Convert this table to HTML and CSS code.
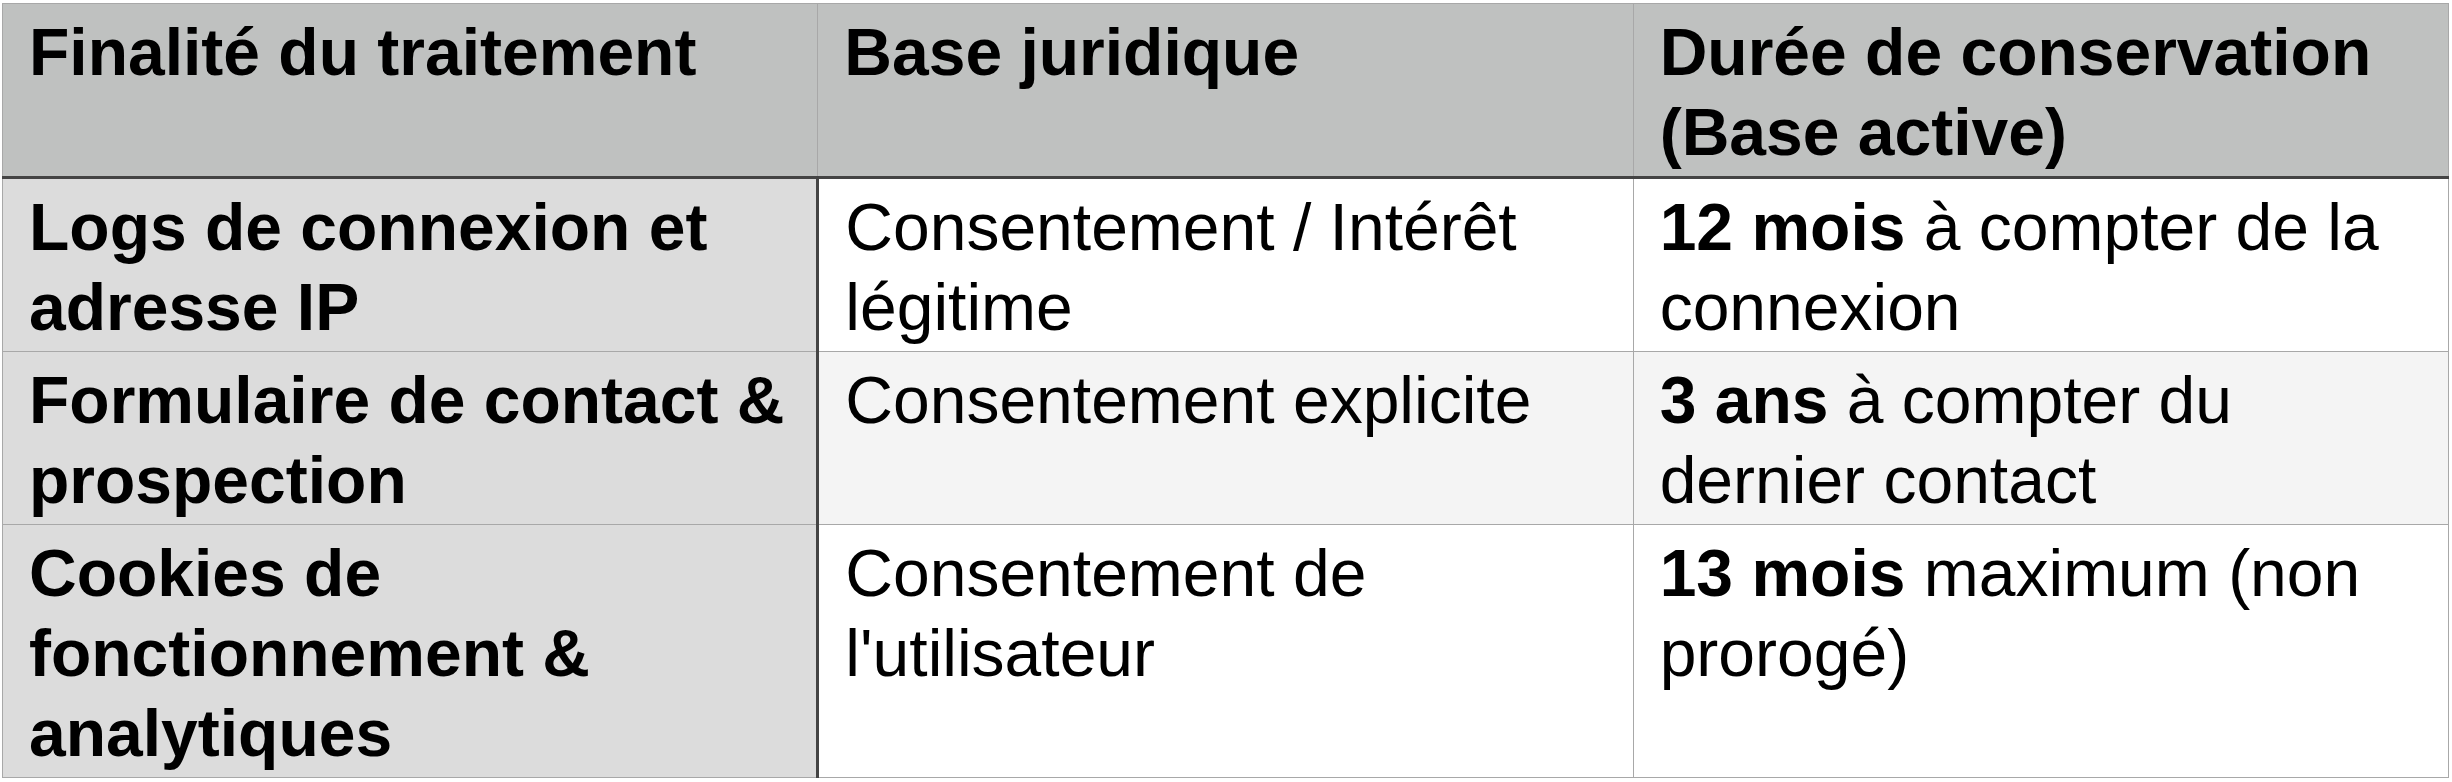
FILE: index.html
```html
<!DOCTYPE html>
<html lang="fr">
<head>
<meta charset="utf-8">
<title>Durées de conservation</title>
<link rel="stylesheet" href="styles.css">
</head>
<body>
<table class="retention">
  <thead>
    <tr>
      <th>Finalité du traitement</th>
      <th>Base juridique</th>
      <th>Durée de conservation (Base active)</th>
    </tr>
  </thead>
  <tbody>
    <tr>
      <th class="purpose">Logs de connexion et adresse IP</th>
      <td>Consentement / Intérêt légitime</td>
      <td><strong>12 mois</strong> <span>à compter de la</span> <span>connexion</span></td>
    </tr>
    <tr class="alt">
      <th class="purpose">Formulaire de contact &amp; prospection</th>
      <td>Consentement explicite</td>
      <td><strong>3 ans</strong> <span>à compter du</span> <span>dernier contact</span></td>
    </tr>
    <tr>
      <th class="purpose">Cookies de fonctionnement &amp; analytiques</th>
      <td>Consentement de l'utilisateur</td>
      <td><strong>13 mois</strong> <span>maximum (non</span> <span>prorogé)</span></td>
    </tr>
  </tbody>
</table>
</body>
</html>
```

FILE: styles.css
```css
html, body {
  margin: 0;
  padding: 0;
  background: #ffffff;
}

body {
  padding: 3px 0 0 2px;
  font-family: "Liberation Sans", Arial, Helvetica, sans-serif;
  color: #000000;
}

.retention {
  width: 2447px;
  table-layout: fixed;
  border-collapse: collapse;
  border: 1px solid #a8a8a8;
  font-size: 66px;
  line-height: 80px;
}

.retention th,
.retention td {
  padding: 8px 20px 4px 26px;
  text-align: left;
  vertical-align: top;
  border: 1px solid #a8a8a8;
}

.retention th {
  font-weight: 700;
}

.retention thead th {
  background: #bfc1c0;
  border-bottom: 3px solid #444444;
}

.retention tbody td {
  background: #ffffff;
  font-weight: 400;
}

.retention tbody .purpose {
  background: #dcdcdc;
  border-right: 3px solid #444444;
}

.retention tbody tr.alt td {
  background: #f4f4f4;
}

.retention strong {
  font-weight: 700;
}
```
